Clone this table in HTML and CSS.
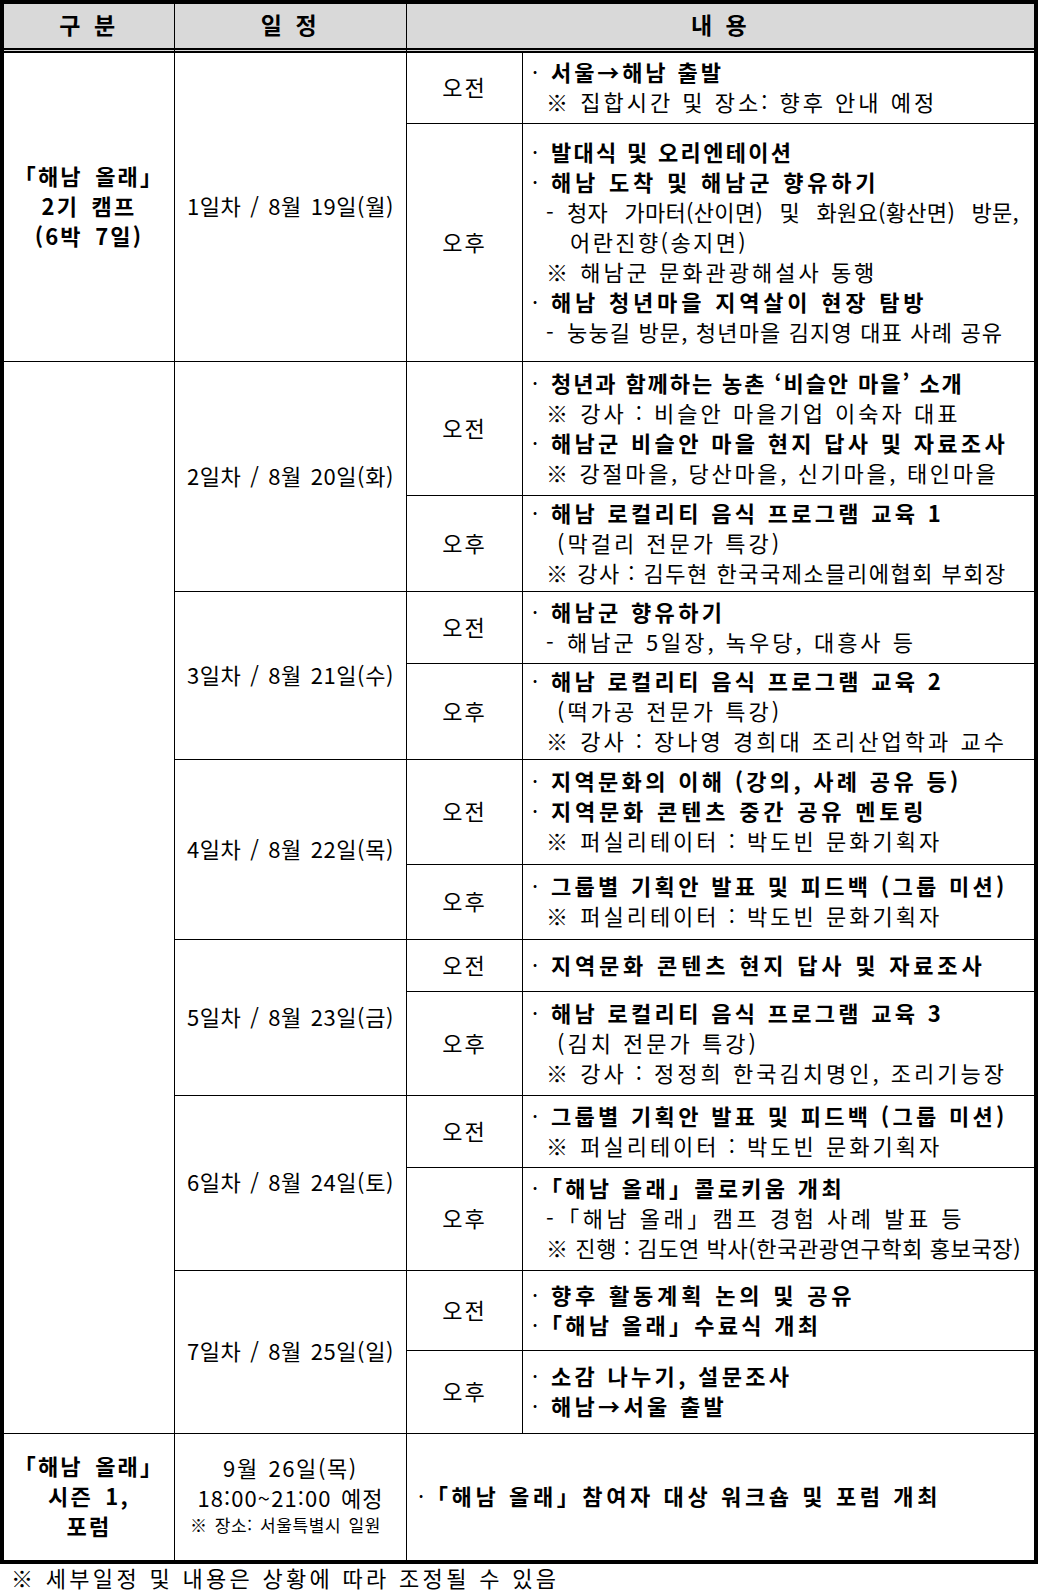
FILE: index.html
```html
<!DOCTYPE html>
<html lang="ko">
<head>
<meta charset="utf-8">
<title>해남 올래 2기 캠프 일정</title>
<link rel="stylesheet" href="styles.css">
</head>
<body>
<table class="sched">
  <colgroup><col class="c1"><col class="c2"><col class="c3"><col class="c4"></colgroup>
  <thead>
    <tr class="hd"><th>구 분</th><th>일 정</th><th colspan="2">내 용</th></tr>
  </thead>
  <tbody>
    <tr class="h71">
      <td rowspan="2" class="grp">
        <div>「해남 올래」</div>
        <div>2기 캠프</div>
        <div>(6박 7일)</div>
      </td>
      <td rowspan="2" class="day">1일차 / 8월 19일(월)</td>
      <td class="tm">오전</td>
      <td class="ct">
        <div class="b bs2"><span class="dot">·</span>서울→해남 출발</div>
        <div class="n">※ 집합시간 및 장소: 향후 안내 예정</div>
      </td>
    </tr>
    <tr class="h238">
      <td class="tm">오후</td>
      <td class="ct">
        <div class="b bs1"><span class="dot">·</span>발대식 및 오리엔테이션</div>
        <div class="b bw"><span class="dot">·</span>해남 도착 및 해남군 향유하기</div>
        <div class="d j"><span class="dash">-</span>청자 가마터(산이면) 및 화원요(황산면) 방문,</div>
        <div class="c s2">어란진향(송지면)</div>
        <div class="n">※ 해남군 문화관광해설사 동행</div>
        <div class="b bw"><span class="dot">·</span>해남 청년마을 지역살이 현장 탐방</div>
        <div class="d s1"><span class="dash">-</span>눙눙길 방문, 청년마을 김지영 대표 사례 공유</div>
      </td>
    </tr>

    <tr class="h134">
      <td rowspan="12" class="grp"></td>
      <td rowspan="2" class="day">2일차 / 8월 20일(화)</td>
      <td class="tm">오전</td>
      <td class="ct">
        <div class="b bs0"><span class="dot">·</span>청년과 함께하는 농촌 ‘비슬안 마을’ 소개</div>
        <div class="n">※ 강사 : 비슬안 마을기업 이숙자 대표</div>
        <div class="b"><span class="dot">·</span>해남군 비슬안 마을 현지 답사 및 자료조사</div>
        <div class="n s27">※ 강절마을, 당산마을, 신기마을, 태인마을</div>
      </td>
    </tr>
    <tr class="h96">
      <td class="tm">오후</td>
      <td class="ct">
        <div class="b"><span class="dot">·</span>해남 로컬리티 음식 프로그램 교육 1</div>
        <div class="p">(막걸리 전문가 특강)</div>
        <div class="n s15">※ 강사 : 김두현 한국국제소믈리에협회 부회장</div>
      </td>
    </tr>

    <tr class="h72">
      <td rowspan="2" class="day">3일차 / 8월 21일(수)</td>
      <td class="tm">오전</td>
      <td class="ct">
        <div class="b"><span class="dot">·</span>해남군 향유하기</div>
        <div class="d"><span class="dash">-</span>해남군 5일장, 녹우당, 대흥사 등</div>
      </td>
    </tr>
    <tr class="h96">
      <td class="tm">오후</td>
      <td class="ct">
        <div class="b"><span class="dot">·</span>해남 로컬리티 음식 프로그램 교육 2</div>
        <div class="p">(떡가공 전문가 특강)</div>
        <div class="n">※ 강사 : 장나영 경희대 조리산업학과 교수</div>
      </td>
    </tr>

    <tr class="h105">
      <td rowspan="2" class="day">4일차 / 8월 22일(목)</td>
      <td class="tm">오전</td>
      <td class="ct">
        <div class="b"><span class="dot">·</span>지역문화의 이해 (강의, 사례 공유 등)</div>
        <div class="b bw"><span class="dot">·</span>지역문화 콘텐츠 중간 공유 멘토링</div>
        <div class="n">※ 퍼실리테이터 : 박도빈 문화기획자</div>
      </td>
    </tr>
    <tr class="h75">
      <td class="tm">오후</td>
      <td class="ct">
        <div class="b"><span class="dot">·</span>그룹별 기획안 발표 및 피드백 (그룹 미션)</div>
        <div class="n">※ 퍼실리테이터 : 박도빈 문화기획자</div>
      </td>
    </tr>

    <tr class="h52">
      <td rowspan="2" class="day">5일차 / 8월 23일(금)</td>
      <td class="tm">오전</td>
      <td class="ct">
        <div class="b bw"><span class="dot">·</span>지역문화 콘텐츠 현지 답사 및 자료조사</div>
      </td>
    </tr>
    <tr class="h104">
      <td class="tm">오후</td>
      <td class="ct">
        <div class="b"><span class="dot">·</span>해남 로컬리티 음식 프로그램 교육 3</div>
        <div class="p">(김치 전문가 특강)</div>
        <div class="n">※ 강사 : 정정희 한국김치명인, 조리기능장</div>
      </td>
    </tr>

    <tr class="h72">
      <td rowspan="2" class="day">6일차 / 8월 24일(토)</td>
      <td class="tm">오전</td>
      <td class="ct">
        <div class="b"><span class="dot">·</span>그룹별 기획안 발표 및 피드백 (그룹 미션)</div>
        <div class="n">※ 퍼실리테이터 : 박도빈 문화기획자</div>
      </td>
    </tr>
    <tr class="h103">
      <td class="tm">오후</td>
      <td class="ct">
        <div class="b"><span class="dot k">·</span>「해남 올래」콜로키움 개최</div>
        <div class="d s35">-「해남 올래」캠프 경험 사례 발표 등</div>
        <div class="n s0">※ 진행 : 김도연 박사(한국관광연구학회 홍보국장)</div>
      </td>
    </tr>

    <tr class="h80">
      <td rowspan="2" class="day">7일차 / 8월 25일(일)</td>
      <td class="tm">오전</td>
      <td class="ct">
        <div class="b bw"><span class="dot">·</span>향후 활동계획 논의 및 공유</div>
        <div class="b"><span class="dot k">·</span>「해남 올래」수료식 개최</div>
      </td>
    </tr>
    <tr class="h83">
      <td class="tm">오후</td>
      <td class="ct">
        <div class="b"><span class="dot">·</span>소감 나누기, 설문조사</div>
        <div class="b"><span class="dot">·</span>해남→서울 출발</div>
      </td>
    </tr>

    <tr class="h126 forum">
      <td class="grp">
        <div>「해남 올래」</div>
        <div>시즌 1,</div>
        <div>포럼</div>
      </td>
      <td class="day">
        <div class="fd1">9월 26일(목)</div>
        <div class="fd2">18:00~21:00 예정</div>
        <div class="small">※ 장소: 서울특별시 일원</div>
      </td>
      <td colspan="2" class="ct fc">
        <div class="b bm"><span class="dot k">·</span>「해남 올래」참여자 대상 워크숍 및 포럼 개최</div>
      </td>
    </tr>
  </tbody>
</table>
<p class="foot">※ 세부일정 및 내용은 상황에 따라 조정될 수 있음</p>
</body>
</html>
```
FILE: styles.css
```css
html, body {
  margin: 0;
  padding: 0;
  background: #fff;
}
body {
  font-family: "Noto Sans CJK KR", "Noto Sans", sans-serif;
  color: #000;
  width: 1038px;
  overflow: hidden;
}
.sched {
  box-sizing: border-box;
  width: 1038px;
  border-collapse: separate;
  border-spacing: 0;
  border: 4px solid #000;
  table-layout: fixed;
}
col.c1 { width: 171px; }
col.c2 { width: 232px; }
col.c3 { width: 116px; }
col.c4 { width: 511px; }

.sched th,
.sched td {
  padding: 0 0 4px 0;
  border-right: 1px solid #000;
  border-bottom: 1px solid #000;
  vertical-align: middle;
  font-size: 22px;
  line-height: 30px;
  font-weight: 400;
}
.sched th:last-child,
.sched td:last-child {
  border-right: none;
}
.sched thead th {
  background: #d9d9d9;
  font-weight: 700;
  font-size: 23px;
  letter-spacing: 3.5px;
  text-align: center;
  border-bottom: 5px double #000;
}
.hd { height: 49px; }
.h52 { height: 52px; }
.h71 { height: 71px; }
.h72 { height: 72px; }
.h75 { height: 75px; }
.h80 { height: 80px; }
.h83 { height: 83px; }
.h96 { height: 96px; }
.h103 { height: 103px; }
.h104 { height: 104px; }
.h105 { height: 105px; }
.h126 { height: 126px; }
.h134 { height: 134px; }
.h238 { height: 238px; }

.forum td { border-bottom: none; }

.sched td.grp {
  text-align: center;
  font-weight: 700;
  font-size: 22px;
  letter-spacing: 2.2px;
  word-spacing: 4px;
}
.day {
  text-align: center;
  letter-spacing: 0.6px;
  word-spacing: 2px;
}
.fd1 { letter-spacing: 1.6px; }
.fd2 { letter-spacing: 1.1px; }
.tm {
  text-align: center;
  letter-spacing: 2px;
}
.sched td.ct {
  padding: 0 9px 4px 9px;
  letter-spacing: 3px;
}
.sched td.ct.fc {
  padding-left: 11px;
}
.ct div { white-space: nowrap; }

.b {
  font-weight: 700;
  font-size: 22px;
  letter-spacing: 3.3px;
}
.dot {
  display: inline-block;
  width: 19px;
  font-size: 22px;
  font-weight: 400;
  letter-spacing: 0;
}
.dot.k { width: 8px; }
.dash {
  display: inline-block;
  width: 21px;
  letter-spacing: 0;
}
.n { padding-left: 14px; }
.d { padding-left: 14px; }
.p { padding-left: 25px; }
.c { padding-left: 38px; }
.ct div.j {
  white-space: normal;
  text-align: justify;
  text-align-last: justify;
  letter-spacing: 0.3px;
  margin-right: 6px;
}
.ct div.s0 { letter-spacing: 0.6px; }
.ct div.s1 { letter-spacing: 1.15px; }
.ct div.s15 { letter-spacing: 1.5px; }
.ct div.s2 { letter-spacing: 2.4px; }
.ct div.s27 { letter-spacing: 2.65px; }
.ct div.s35 { letter-spacing: 3.5px; }
.ct div.bs0 { letter-spacing: 1.9px; }
.ct div.bs1 { letter-spacing: 2.3px; }
.ct div.bs2 { letter-spacing: 2.9px; }
.ct div.bw { letter-spacing: 3.8px; }
.ct div.bm { letter-spacing: 3.6px; }

.small {
  font-size: 17px;
  line-height: 26px;
  letter-spacing: 0.6px;
  margin-right: 10px;
}

.foot {
  margin: 0;
  padding-left: 11px;
  font-size: 22px;
  line-height: 26px;
  letter-spacing: 3.3px;
  white-space: nowrap;
}
```
